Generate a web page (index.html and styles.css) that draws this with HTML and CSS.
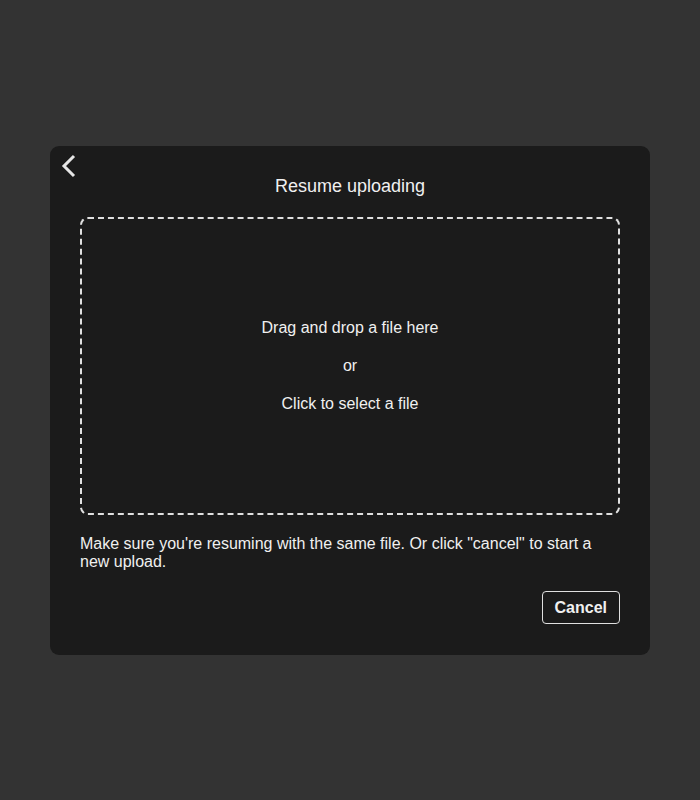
FILE: index.html
```html
<!DOCTYPE html>
<html>
<head>
<meta charset="utf-8">
<link rel="stylesheet" href="styles.css">
</head>
<body>
<div class="page">
  <div class="modal">
    <button class="back" aria-label="Back">
      <svg width="18" height="26" viewBox="0 0 18 26"><path d="M14 3 L4 13 L14 23" fill="none" stroke="#e6e6e6" stroke-width="3"/></svg>
    </button>
    <h2 class="title">Resume uploading</h2>
    <div class="dropzone">
      <p>Drag and drop a file here</p>
      <p>or</p>
      <p>Click to select a file</p>
    </div>
    <p class="note">Make sure you're resuming with the same file. Or click "cancel" to start a new upload.</p>
    <div class="actions">
      <button class="cancel">Cancel</button>
    </div>
  </div>
</div>
</body>
</html>
```
FILE: styles.css
```css
html, body {
  margin: 0;
  padding: 0;
  background: #333333;
  font-family: "Liberation Sans", Arial, sans-serif;
  color: #f0f0f0;
}
.page {
  height: 800px;
  padding-top: 146px;
  box-sizing: border-box;
  display: flex;
  justify-content: center;
  align-items: flex-start;
}
.modal {
  position: relative;
  width: 600px;
  box-sizing: border-box;
  background: #1b1b1b;
  border-radius: 9px;
  padding: 30px 30px 31px;
}
.back {
  position: absolute;
  left: 10px;
  top: 7px;
  background: none;
  border: 0;
  padding: 0;
  margin: 0;
  width: 18px;
  height: 26px;
  cursor: pointer;
}
.back svg { display: block; }
.title {
  margin: 0;
  font-size: 18px;
  font-weight: normal;
  line-height: 21px;
  text-align: center;
  color: #f0f0f0;
}
.dropzone {
  margin-top: 20px;
  height: 298px;
  box-sizing: border-box;
  border: 2px dashed #e0e0e0;
  border-radius: 8px;
  display: flex;
  flex-direction: column;
  align-items: center;
  justify-content: center;
  gap: 20px;
}
.dropzone p {
  margin: 0;
  font-size: 16px;
  line-height: 18px;
}
.note {
  margin: 20px 0 0;
  font-size: 16px;
  line-height: 18px;
}
.actions {
  margin-top: 20px;
  display: flex;
  justify-content: flex-end;
}
.cancel {
  font-family: "Liberation Sans", Arial, sans-serif;
  font-size: 16px;
  font-weight: bold;
  line-height: 19px;
  color: #f0f0f0;
  background: transparent;
  border: 1px solid #e0e0e0;
  border-radius: 4px;
  padding: 6px 12px;
  height: 33px;
  box-sizing: border-box;
  cursor: pointer;
}
```
